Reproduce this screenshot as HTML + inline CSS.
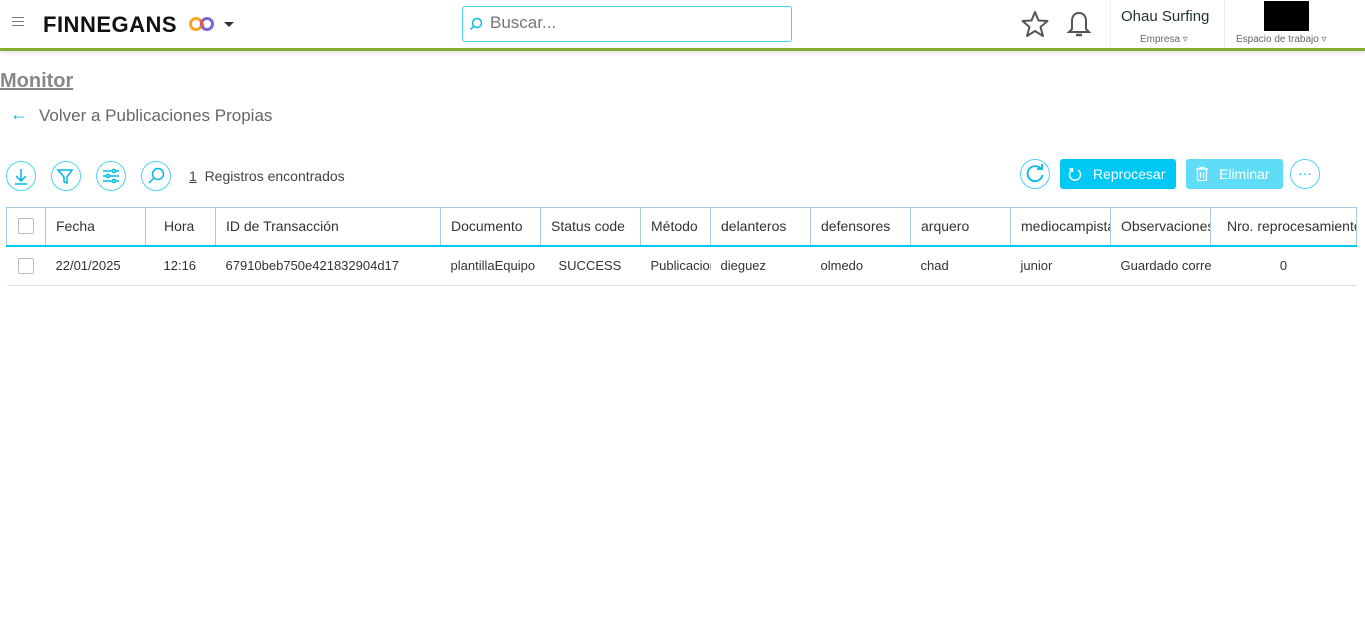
<!DOCTYPE html>
<html><head><meta charset="utf-8"><style>
*{margin:0;padding:0;box-sizing:border-box}
body{width:1365px;height:625px;background:#fff;font-family:"Liberation Sans",sans-serif;position:relative;overflow:hidden;color:#333}
.a{position:absolute}
.top{position:absolute;left:0;top:0;width:1365px;height:51px;background:#fff;border-bottom:3px solid #86ae2e;box-shadow:0 2px 4px rgba(0,0,0,.12)}
.circ{position:absolute;width:30px;height:30px;border:1px solid #4fd2f5;border-radius:50%;top:161px}
table{position:absolute;left:6px;top:207px;border-collapse:collapse;table-layout:fixed;width:1350px}
th{height:38px;border-top:1px solid #a9cde0;border-right:1px solid #a9cde0;border-bottom:2px solid #00c8f5;font-weight:normal;font-size:14px;color:#333;text-align:left;padding-left:10px;white-space:nowrap;overflow:hidden}
td{height:40px;font-size:13px;color:#333;padding-left:10px;white-space:nowrap;overflow:hidden;border-bottom:1px solid #ddd}
.cb{width:16px;height:16px;border:1px solid #bbb;border-radius:2px;display:inline-block}
</style></head><body>
<div class="top">
 <div class="a" style="left:12px;top:17px;width:12px;height:1px;background:#777;box-shadow:0 4px 0 #777,0 8px 0 #777"></div>
 <div class="a" style="left:43px;top:12px;font-size:22px;font-weight:bold;color:#111;letter-spacing:0.5px">FINNEGANS</div>
 <svg class="a" style="left:188px;top:15px" width="28" height="18"><circle cx="8" cy="9" r="5.5" fill="none" stroke="#f5a623" stroke-width="3"/><circle cx="19" cy="9" r="5.5" fill="none" stroke="#7a66d6" stroke-width="3"/><path d="M13 5 L15 12" stroke="#ee5555" stroke-width="3"/></svg>
 <div class="a" style="left:224px;top:22px;border:5px solid transparent;border-top:5px solid #333"></div>
 <div class="a" style="left:462px;top:6px;width:330px;height:36px;border:1px solid #4fd2f5;border-radius:3px"></div>
 <svg class="a" style="left:469px;top:17px" width="14" height="14"><circle cx="8" cy="6" r="4.5" fill="none" stroke="#00b8e6" stroke-width="1.4"/><path d="M5 9 L1.5 12.5" stroke="#00b8e6" stroke-width="1.4"/></svg>
 <div class="a" style="left:490px;top:13px;font-size:17px;color:#777">Buscar...</div>
 <svg class="a" style="left:1020px;top:10px" width="30" height="28"><path d="M15 2 L18.5 10.5 L27.5 11 L20.5 17 L23 26 L15 21 L7 26 L9.5 17 L2.5 11 L11.5 10.5 Z" fill="none" stroke="#555" stroke-width="2" stroke-linejoin="round"/></svg>
 <svg class="a" style="left:1066px;top:10px" width="26" height="30"><path d="M13 3 C8 3 6 7 6 11 L6 19 L3 22 L23 22 L20 19 L20 11 C20 7 18 3 13 3 Z" fill="none" stroke="#555" stroke-width="2"/><path d="M10 25 L16 25" stroke="#555" stroke-width="2.5"/></svg>
 <div class="a" style="left:1110px;top:0;width:1px;height:48px;background:#eee"></div>
 <div class="a" style="left:1224px;top:0;width:1px;height:48px;background:#eee"></div>
 <div class="a" style="left:1121px;top:8px;font-size:15px;color:#233">Ohau Surfing</div>
 <div class="a" style="left:1140px;top:34px;font-size:10px;color:#666">Empresa ▿</div>
 <div class="a" style="left:1264px;top:1px;width:45px;height:30px;background:#000"></div>
 <div class="a" style="left:1236px;top:34px;font-size:10px;color:#666">Espacio de trabajo ▿</div>
</div>
<div class="a" style="left:0;top:70px;font-size:20px;font-weight:bold;color:#888;text-decoration:underline">Monitor</div>
<div class="a" style="left:10px;top:104px;font-size:18px;color:#00b8e6">←</div>
<div class="a" style="left:39px;top:106px;font-size:17px;color:#666">Volver a Publicaciones Propias</div>
<div class="circ" style="left:6px"></div><div class="circ" style="left:51px"></div><div class="circ" style="left:96px"></div><div class="circ" style="left:141px"></div>
<svg class="a" style="left:6px;top:161px" width="170" height="30" fill="none" stroke="#00b8e6" stroke-width="1.5">
<path d="M15 8 V20 M10 15 L15 20 L20 15 M9 23 H21"/>
<path d="M52 9 H66 L61 16 V22 L58 21 V16 Z"/>
<path d="M97 10 H113 M97 15 H113 M97 20 H113"/><circle cx="108" cy="10" r="1.6" fill="#fff"/><circle cx="102" cy="15" r="1.6" fill="#fff"/><circle cx="108" cy="20" r="1.6" fill="#fff"/>
<circle cx="152" cy="13" r="5.5"/><path d="M148 17 L143 22"/>
</svg>
<div class="a" style="left:189px;top:168px;font-size:14px;color:#444"><u>1</u>&nbsp; Registros encontrados</div>
<div class="circ" style="left:1020px;top:159px"></div>
<svg class="a" style="left:1020px;top:159px" width="30" height="30"><path d="M21 10 A7.5 7.5 0 1 0 22.5 16" fill="none" stroke="#00b8e6" stroke-width="1.8"/><path d="M17 10 H22 V5" fill="none" stroke="#00b8e6" stroke-width="1.8"/></svg>
<div class="a" style="left:1060px;top:159px;width:116px;height:30px;background:#00c8f5;border-radius:3px;color:#fff;font-size:14px;padding:7px 0 0 33px">Reprocesar</div>
<svg class="a" style="left:1067px;top:166px" width="16" height="16"><path d="M11 4 A5.5 5.5 0 1 1 5 4" fill="none" stroke="#fff" stroke-width="1.5"/><path d="M2.5 3 H5.5 V6" fill="none" stroke="#fff" stroke-width="1.5"/></svg>
<div class="a" style="left:1186px;top:159px;width:97px;height:30px;background:#5fdcf8;border-radius:3px;color:#fff;font-size:14px;padding:7px 0 0 33px">Eliminar</div>
<svg class="a" style="left:1194px;top:166px" width="16" height="16" fill="none" stroke="#fff" stroke-width="1.3"><path d="M2 3 H14 M6 3 V1.5 H10 V3 M3.5 3 V14.5 H12.5 V3 M6.5 6 V12 M9.5 6 V12"/></svg>
<div class="circ" style="left:1290px;top:159px;color:#00b8e6;text-align:center;font-size:14px;line-height:26px">···</div>
<table>
<colgroup><col style="width:39px"><col style="width:100px"><col style="width:70px"><col style="width:225px"><col style="width:100px"><col style="width:100px"><col style="width:70px"><col style="width:100px"><col style="width:100px"><col style="width:100px"><col style="width:100px"><col style="width:100px"><col style="width:146px"></colgroup>
<tr><th style="border-left:1px solid #a9cde0;padding-left:11px"><span class="cb" style="margin-top:3px"></span></th><th>Fecha</th><th style="padding-left:18px">Hora</th><th>ID de Transacción</th><th>Documento</th><th>Status code</th><th>Método</th><th>delanteros</th><th>defensores</th><th>arquero</th><th>mediocampistas</th><th>Observaciones</th><th style="padding-left:16px">Nro. reprocesamientos</th></tr>
<tr><td style="padding-left:11px"><span class="cb" style="margin-top:3px"></span></td><td>22/01/2025</td><td style="padding-left:18px">12:16</td><td>67910beb750e421832904d17</td><td>plantillaEquipo</td><td style="padding-left:18px">SUCCESS</td><td>Publicacion</td><td>dieguez</td><td>olmedo</td><td>chad</td><td>junior</td><td>Guardado correctamente</td><td style="text-align:center;padding-left:0;padding-right:0">0</td></tr>
</table>
</body></html>
